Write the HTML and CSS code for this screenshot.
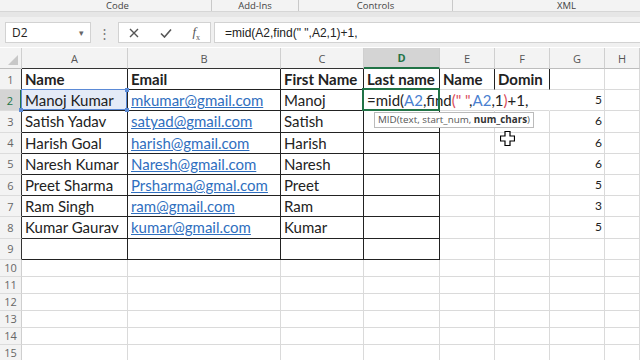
FILE: index.html
```html
<!DOCTYPE html>
<html lang="en">
<head>
    <meta charset="UTF-8">
    <title>Book1 - Excel</title>
    <link rel="stylesheet" href="styles.css">
</head>
<body>
    <div class="ribbon">
        <div class="group g-code">Code</div>
        <div class="group g-addins">Add-Ins</div>
        <div class="group g-controls">Controls</div>
        <div class="group g-xml">XML</div>
    </div>
    <div class="band"></div>

    <div class="formula-bar">
        <div class="name-box">
            <span>D2</span>
            <span class="caret">&#9662;</span>
        </div>
        <div class="grip">&#8942;</div>
        <div class="func-box">
            <svg width="10" height="10" viewBox="0 0 10 10"><path d="M1 1 L9 9 M9 1 L1 9" stroke="#555" stroke-width="1.4" fill="none"/></svg>
            <svg width="12" height="10" viewBox="0 0 12 10"><path d="M1 5.5 L4.5 9 L11 1.5" stroke="#555" stroke-width="1.6" fill="none"/></svg>
            <span class="fx"><i>f</i><sub>x</sub></span>
        </div>
        <div class="formula-input">=mid(A2,find(" ",A2,1)+1,</div>
    </div>

    <div class="sheet">
        <!-- column headers -->
        <div class="corner"><svg width="10" height="10" viewBox="0 0 10 10"><path d="M10 0 L10 10 L0 10 Z" fill="#c8c8c8"/></svg></div>
        <div class="ch tb">A</div>
        <div class="ch tb">B</div>
        <div class="ch tb">C</div>
        <div class="ch sel">D</div>
        <div class="ch">E</div>
        <div class="ch">F</div>
        <div class="ch">G</div>
        <div class="ch">H</div>

        <!-- row 1 -->
        <div class="rh tl">1</div>
        <div class="c t hd">Name</div>
        <div class="c t hd">Email</div>
        <div class="c t hd">First Name</div>
        <div class="c t hd">Last name</div>
        <div class="c hd rb">Name</div>
        <div class="c hd rb">Domin</div>
        <div class="c"></div>
        <div class="c"></div>

        <!-- row 2 -->
        <div class="rh sel">2</div>
        <div class="c t ref">Manoj Kumar<i class="hdl h1"></i><i class="hdl h2"></i><i class="hdl h3"></i></div>
        <div class="c t"><a class="link">mkumar@gmail.com</a></div>
        <div class="c t">Manoj</div>
        <div class="c t active">=mid(<span class="r-blue">A2</span>,find<span class="r-red">(" "</span>,<span class="r-blue">A2</span>,1<span class="r-red">)</span>+1,
            <div class="tip">MID(text, start_num, <b>num_chars</b>)</div>
        </div>
        <div class="c ovf"></div>
        <div class="c ovf"></div>
        <div class="c num">5</div>
        <div class="c"></div>

        <!-- row 3 -->
        <div class="rh tl">3</div>
        <div class="c t">Satish Yadav</div>
        <div class="c t"><a class="link">satyad@gmail.com</a></div>
        <div class="c t">Satish</div>
        <div class="c t"></div>
        <div class="c"></div>
        <div class="c"></div>
        <div class="c num">6</div>
        <div class="c"></div>

        <!-- row 4 -->
        <div class="rh tl">4</div>
        <div class="c t">Harish Goal</div>
        <div class="c t"><a class="link">harish@gmail.com</a></div>
        <div class="c t">Harish</div>
        <div class="c t"></div>
        <div class="c"></div>
        <div class="c cur-cell">
            <svg class="cursor" width="15" height="15" viewBox="0 0 15 15"><path d="M5 0.5 H10 V5 H14.5 V10 H10 V14.5 H5 V10 H0.5 V5 H5 Z" fill="#fff" stroke="#000" stroke-width="1.2"/></svg>
        </div>
        <div class="c num">6</div>
        <div class="c"></div>

        <!-- row 5 -->
        <div class="rh tl">5</div>
        <div class="c t">Naresh Kumar</div>
        <div class="c t"><a class="link">Naresh@gmail.com</a></div>
        <div class="c t">Naresh</div>
        <div class="c t"></div>
        <div class="c"></div>
        <div class="c"></div>
        <div class="c num">6</div>
        <div class="c"></div>

        <!-- row 6 -->
        <div class="rh tl">6</div>
        <div class="c t">Preet Sharma</div>
        <div class="c t"><a class="link">Prsharma@gmal.com</a></div>
        <div class="c t">Preet</div>
        <div class="c t"></div>
        <div class="c"></div>
        <div class="c"></div>
        <div class="c num">5</div>
        <div class="c"></div>

        <!-- row 7 -->
        <div class="rh tl">7</div>
        <div class="c t">Ram Singh</div>
        <div class="c t"><a class="link">ram@gmail.com</a></div>
        <div class="c t">Ram</div>
        <div class="c t"></div>
        <div class="c"></div>
        <div class="c"></div>
        <div class="c num">3</div>
        <div class="c"></div>

        <!-- row 8 -->
        <div class="rh tl">8</div>
        <div class="c t">Kumar Gaurav</div>
        <div class="c t"><a class="link">kumar@gmail.com</a></div>
        <div class="c t">Kumar</div>
        <div class="c t"></div>
        <div class="c"></div>
        <div class="c"></div>
        <div class="c num">5</div>
        <div class="c"></div>

        <!-- row 9 -->
        <div class="rh tl">9</div>
        <div class="c t"></div>
        <div class="c t"></div>
        <div class="c t"></div>
        <div class="c t"></div>
        <div class="c"></div>
        <div class="c"></div>
        <div class="c"></div>
        <div class="c"></div>

        <!-- rows 10-15 -->
        <div class="rh">10</div><div class="c"></div><div class="c"></div><div class="c"></div><div class="c"></div><div class="c"></div><div class="c"></div><div class="c"></div><div class="c"></div>
        <div class="rh">11</div><div class="c"></div><div class="c"></div><div class="c"></div><div class="c"></div><div class="c"></div><div class="c"></div><div class="c"></div><div class="c"></div>
        <div class="rh">12</div><div class="c"></div><div class="c"></div><div class="c"></div><div class="c"></div><div class="c"></div><div class="c"></div><div class="c"></div><div class="c"></div>
        <div class="rh">13</div><div class="c"></div><div class="c"></div><div class="c"></div><div class="c"></div><div class="c"></div><div class="c"></div><div class="c"></div><div class="c"></div>
        <div class="rh">14</div><div class="c"></div><div class="c"></div><div class="c"></div><div class="c"></div><div class="c"></div><div class="c"></div><div class="c"></div><div class="c"></div>
        <div class="rh">15</div><div class="c"></div><div class="c"></div><div class="c"></div><div class="c"></div><div class="c"></div><div class="c"></div><div class="c"></div><div class="c"></div>
    </div>
</body>
</html>
```

FILE: styles.css
```css
body {
    margin: 0;
    width: 640px;
    height: 360px;
    overflow: hidden;
    background: #fff;
    font-family: 'Open Sans', 'Noto Sans', sans-serif;
    color: #222;
}

/* ribbon group labels */
.ribbon {
    display: flex;
    height: 11px;
    background: #f3f3f3;
    border-bottom: 1px solid #d6d6d6;
    font-size: 9.5px;
    line-height: 11px;
    color: #444;
}

.group {
    text-align: center;
    border-right: 1px solid #c9c9c9;
    height: 11px;
}

.g-code { width: 187px; padding-left: 24px; }
.g-addins { width: 86px; }
.g-controls { width: 153px; }
.g-xml { flex: 1; border-right: none; padding-left: 40px; }

.band {
    height: 5px;
    background: #e6e6e6;
}

/* formula bar */
.formula-bar {
    display: flex;
    align-items: center;
    height: 30px;
    background: #f0f0f0;
    padding-left: 5px;
    box-sizing: border-box;
    padding-top: 1px;
}

.name-box,
.func-box,
.formula-input {
    height: 21px;
    background: #fff;
    border: 1px solid #d2d2d2;
    box-sizing: border-box;
    display: flex;
    align-items: center;
}

.name-box {
    width: 86px;
    padding: 0 6px;
    justify-content: space-between;
    font-size: 12px;
}

.caret {
    font-size: 9px;
    color: #666;
}

.grip {
    width: 27px;
    text-align: center;
    color: #777;
    font-size: 13px;
}

.func-box {
    width: 93px;
    padding: 0 10px 0 10px;
    justify-content: space-between;
}

.fx {
    font-family: 'Liberation Serif', serif;
    font-size: 13px;
    color: #555;
}

.fx sub {
    font-size: 8px;
}

.formula-input {
    flex: 1;
    margin-left: 3px;
    padding-left: 10px;
    font-family: 'Liberation Sans', sans-serif;
    font-size: 12px;
    border-right: none;
}

/* sheet grid */
.sheet {
    display: grid;
    grid-template-columns: 22px 106px 153px 83px 76px 55px 55px 55px 1fr;
    grid-template-rows: 21px repeat(9, 21.2px) repeat(6, 17px);
    margin-top: 1px;
}

.corner,
.ch,
.rh {
    background: #f3f3f3;
    color: #555;
    font-size: 11px;
    box-sizing: border-box;
    border-right: 1px solid #cfcfcf;
    border-bottom: 1px solid #bdbdbd;
    display: flex;
    align-items: center;
    justify-content: center;
}

.corner {
    align-items: flex-end;
    justify-content: flex-end;
    padding: 0 3px 3px 0;
}

.ch.tb {
    border-bottom-color: #333;
}

.ch.sel {
    background: #d4d4d4;
    color: #217346;
    font-weight: bold;
    border-bottom: 2px solid #217346;
}

.rh {
    border-bottom-color: #dcdcdc;
    color: #666;
}

.rh.tl {
    border-right-color: #333;
}

.rh.sel {
    background: #d4d4d4;
    color: #217346;
    border-right: 2px solid #217346;
}

.c {
    box-sizing: border-box;
    border-right: 1px solid #dadada;
    border-bottom: 1px solid #dadada;
    font-family: Lato, 'Open Sans', sans-serif;
    font-size: 15px;
    line-height: 20px;
    padding-left: 3px;
    white-space: nowrap;
    overflow: hidden;
}

.c.t {
    border-right-color: #222;
    border-bottom-color: #222;
}

.c.rb {
    border-right-color: #222;
}

.hd {
    font-weight: bold;
}

.link {
    color: #2f6fc0;
    text-decoration: underline;
}

.num {
    font-size: 12px;
    text-align: right;
    padding-right: 2px;
}

.ovf {
    border-right-color: transparent;
}

/* A2 is the range referenced by the formula */
.ref {
    position: relative;
    overflow: visible;
    background: #e4ebf7;
}

.ref::after {
    content: "";
    position: absolute;
    inset: -1px 0 0 -1px;
    border: 1px solid #5b8ad6;
}

.hdl {
    position: absolute;
    width: 4px;
    height: 4px;
    background: #5b8ad6;
    z-index: 1;
}

.h1 { top: -2px; right: -2px; }
.h2 { bottom: -2px; right: -2px; }
.h3 { bottom: -2px; left: -3px; }

/* active cell being edited */
.active {
    position: relative;
    overflow: visible;
    z-index: 2;
}

.active::after {
    content: "";
    position: absolute;
    inset: -2px -1px -1px -2px;
    border: 2px solid #217346;
}

.r-blue { color: #4a7fd0; }
.r-red { color: #d94b5a; }

.tip {
    position: absolute;
    left: 10px;
    top: 22px;
    padding: 0 3px;
    background: #fff;
    border: 1px solid #bbb;
    font-family: 'Open Sans', sans-serif;
    font-size: 9.8px;
    line-height: 14px;
    color: #555;
    z-index: 3;
}

.tip b {
    color: #333;
}

.cur-cell {
    position: relative;
    overflow: visible;
}

.cursor {
    position: absolute;
    left: 5px;
    top: -2px;
    z-index: 4;
}
```
